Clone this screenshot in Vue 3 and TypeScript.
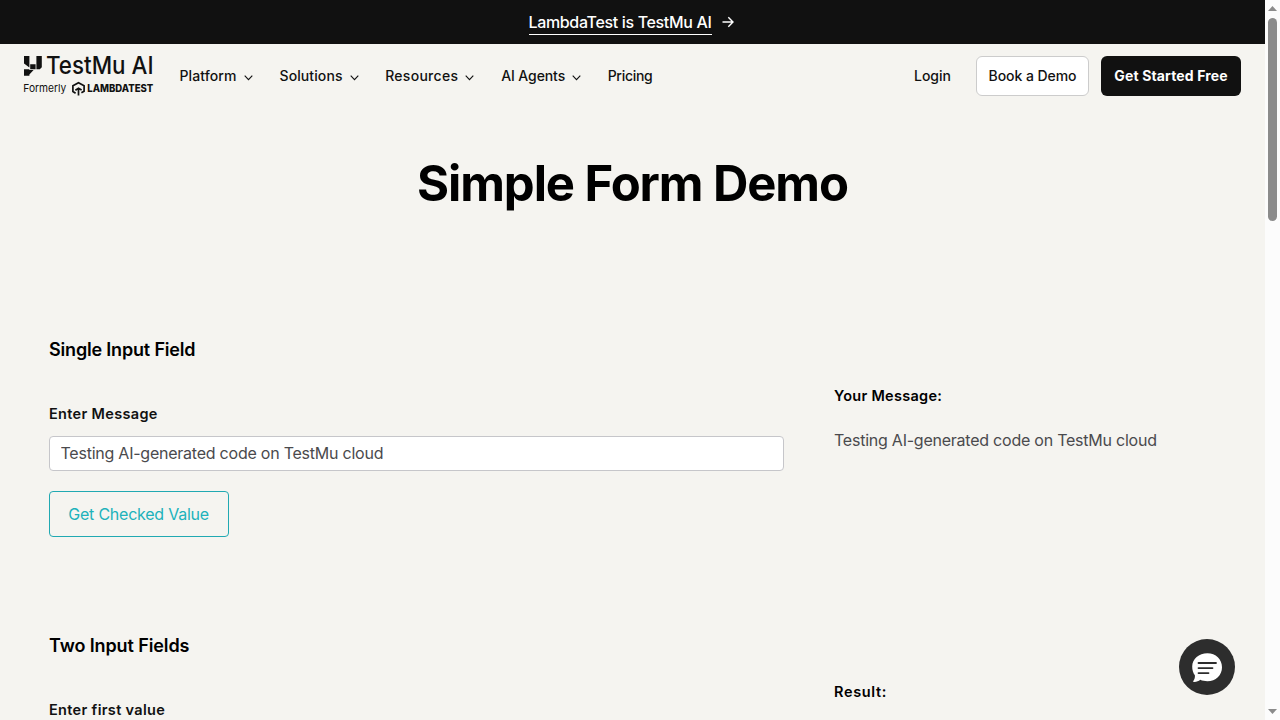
<script setup lang="ts">
import { ref } from 'vue'

interface NavItem {
  label: string
  key: string
  menu: boolean
}

const navItems: NavItem[] = [
  { label: 'Platform', key: 'platform', menu: true },
  { label: 'Solutions', key: 'solutions', menu: true },
  { label: 'Resources', key: 'resources', menu: true },
  { label: 'AI Agents', key: 'agents', menu: true },
  { label: 'Pricing', key: 'pricing', menu: false },
]

const message = ref('Testing AI-generated code on TestMu cloud')
const shown = ref(message.value)

function showMessage(): void {
  shown.value = message.value
}
</script>

<template>
  <div class="viewport">
    <div class="page">
      <div class="banner">
        <a class="banner-link">LambdaTest is TestMu AI</a>
        <svg class="banner-arrow" width="12" height="12" viewBox="0 0 12 12">
          <path d="M0.5 6H11M6.3 1.2L11 6L6.3 10.8" />
        </svg>
      </div>

      <header class="header">
        <a class="logo">
          <svg width="130" height="42" viewBox="0 0 130 42">
            <path class="ink" d="M0 1H5.4V12.6L0 8.6ZM12.4 1H17.8V12.2L15.8 14.2H12.4ZM0 14.2H5.4V20.8H0ZM6.2 9.2H11.6V14.2H6.2ZM5.4 15H9.6L5.4 19.6Z" />
            <text class="brand" x="22" y="19" textLength="107.5" lengthAdjust="spacingAndGlyphs">TestMu AI</text>
            <text class="formerly" x="-0.7" y="37" textLength="43" lengthAdjust="spacingAndGlyphs">Formerly</text>
            <path class="mark" d="M51.6 38.2L48.9 36.5V30.8L54.5 27.7L60.1 30.8V36.2L57.4 37.8M54.5 40.6V33.6M51.4 35.2L54.5 33.2L57.6 35" />
            <text class="lambda" x="63.3" y="37" textLength="66" lengthAdjust="spacingAndGlyphs">LAMBDATEST</text>
          </svg>
        </a>
        <nav class="nav">
          <a v-for="item in navItems" :key="item.key" class="nav-item" :class="item.key">
            <span class="nav-label">{{ item.label }}</span>
            <svg v-if="item.menu" class="chevron" width="9" height="6" viewBox="0 0 9 6">
              <path d="M0.7 0.7L4.5 4.7L8.3 0.7" />
            </svg>
          </a>
        </nav>
        <div class="actions">
          <a class="login">Login</a>
          <a class="btn demo"><span>Book a Demo</span></a>
          <a class="btn start"><span>Get Started Free</span></a>
        </div>
      </header>

      <section class="hero">
        <h1>Simple Form Demo</h1>
      </section>

      <main class="content">
        <section class="block">
          <h2 class="single-title">Single Input Field</h2>
          <div class="columns">
            <div class="form">
              <label>Enter Message</label>
              <input v-model="message" class="field" type="text" />
              <button class="check" type="button" @click="showMessage">Get Checked Value</button>
            </div>
            <div class="output">
              <strong>Your Message:</strong>
              <p>{{ shown }}</p>
            </div>
          </div>
        </section>
        <section class="block">
          <h2>Two Input Fields</h2>
          <div class="columns">
            <div class="form">
              <label>Enter first value</label>
            </div>
            <div class="output">
              <strong class="result-title">Result:</strong>
            </div>
          </div>
        </section>
      </main>
    </div>

    <div class="scrollbar">
      <svg width="9" height="5" viewBox="0 0 9 5"><path d="M0 5L4.5 0L9 5Z" /></svg>
      <div class="thumb"></div>
      <svg class="down" width="9" height="5" viewBox="0 0 9 5"><path d="M0 0L4.5 5L9 0Z" /></svg>
    </div>

    <button class="chat" type="button" aria-label="Chat">
      <svg width="56" height="56" viewBox="0 0 56 56">
        <path class="bubble" d="M28.4 14.2C20 14.2 13.2 19.7 13.2 27.5C13.2 31 14.1 34 15.9 36.3C16.2 38.5 15.3 41 13.8 42.8C16.8 43.2 19.2 42.5 21.3 40.8C23.4 41.8 25.8 42.2 28.4 42.2C36.8 42.2 43 36.2 43 28.2C43 20.2 36.8 14.2 28.4 14.2Z" />
        <path class="lines" d="M19.5 24H37M19.5 29.1H33.5M19.5 34.1H29.5" />
      </svg>
    </button>
  </div>
</template>

<style>
html,
body {
  margin: 0;
  overflow: hidden;
}
</style>

<style scoped>
* {
  box-sizing: border-box;
}

.viewport {
  position: relative;
  display: flex;
  width: 1280px;
  height: 720px;
  overflow: hidden;
  font-family: Inter, 'Noto Sans', sans-serif;
  color: #111;
  background: #f5f4f0;
}

.page {
  width: 1265px;
  height: 720px;
  overflow: hidden;
}

.banner {
  display: flex;
  justify-content: center;
  align-items: center;
  gap: 10px;
  height: 44px;
  padding-right: 3px;
  background: #111;
}

.banner-link {
  height: 25px;
  margin-top: 1px;
  width: 183px;
  border-bottom: 1px solid #fff;
  color: #fff;
  font-size: 16px;
  font-weight: 500;
  line-height: 25px;
  letter-spacing: -0.34px;
  white-space: nowrap;
}

.banner-arrow path {
  fill: none;
  stroke: #fff;
  stroke-width: 1.4;
}

.header {
  display: flex;
  align-items: center;
  height: 64px;
  padding: 0 24px;
}

.logo {
  width: 130px;
  height: 42px;
  margin-right: 25.5px;
}

.logo svg {
  display: block;
  overflow: visible;
}

.ink {
  fill: #111;
}

.brand {
  font-size: 24.5px;
  font-weight: 500;
  fill: #111;
}

.formerly {
  font-size: 11px;
  fill: #111;
}

.mark {
  fill: none;
  stroke: #111;
  stroke-width: 1.7;
}

.lambda {
  font-size: 10px;
  font-weight: 800;
  fill: #111;
}

.nav {
  display: flex;
}

.nav-item {
  display: flex;
  align-items: center;
  font-size: 14px;
  font-weight: 500;
  line-height: 20px;
  white-space: nowrap;
}

.platform {
  width: 100px;
  letter-spacing: 0.1px;
}

.solutions {
  width: 105.7px;
  letter-spacing: 0.1px;
}

.resources {
  width: 116px;
  letter-spacing: 0.28px;
}

.agents {
  width: 106.5px;
  letter-spacing: -0.1px;
}

.pricing {
  letter-spacing: -0.3px;
}

.platform .nav-label { width: 64.5px; }
.solutions .nav-label { width: 70.5px; }
.resources .nav-label { width: 80px; }
.agents .nav-label { width: 71px; }

.chevron {
  margin-top: 3px;
}

.chevron path {
  fill: none;
  stroke: #111;
  stroke-width: 1.1;
}

.actions {
  display: flex;
  align-items: center;
  margin-left: auto;
  font-size: 14px;
  font-weight: 500;
  line-height: 20px;
  white-space: nowrap;
}

.login {
  width: 62px;
}

.btn {
  display: flex;
  align-items: center;
  height: 40px;
  border-radius: 6px;
}

.demo {
  width: 113px;
  margin-right: 12px;
  padding-left: 11.5px;
  border: 1px solid #ccc;
  background: #fff;
  letter-spacing: -0.05px;
}

.start {
  width: 140px;
  padding-left: 13.3px;
  background: #111;
  color: #fff;
  font-weight: 700;
  letter-spacing: 0.14px;
}

.hero {
  height: 218px;
  padding-top: 45px;
}

h1 {
  margin: 0;
  color: #000;
  font-size: 49px;
  font-weight: 700;
  line-height: 62px;
  letter-spacing: -1.1px;
  text-align: center;
}

.content {
  padding: 0 49px;
}

.block {
  height: 296px;
  padding-top: 10px;
}

h2 {
  margin: 0;
  color: #000;
  font-size: 18px;
  font-weight: 600;
  line-height: 28px;
  letter-spacing: -0.1px;
}

.single-title {
  letter-spacing: -0.18px;
}

.columns {
  display: flex;
  gap: 50px;
}

.form {
  width: 735px;
  padding-top: 40px;
}

label {
  display: block;
  font-size: 14.5px;
  font-weight: 600;
  line-height: 20px;
  letter-spacing: 0.33px;
}

.field {
  display: block;
  width: 735px;
  height: 35px;
  margin: 12px 0 20px;
  padding: 0 10.5px 2px;
  border: 1px solid #c6c6ca;
  border-radius: 4px;
  background: #fff;
  color: #4a4a4d;
  font: 400 16px Inter, sans-serif;
  letter-spacing: -0.235px;
}

.check {
  width: 180px;
  height: 46px;
  padding: 0 0 0 18.3px;
  border: 1px solid #21a9b2;
  border-radius: 4px;
  background: transparent;
  color: #20b2bb;
  font: 400 16px Inter, sans-serif;
  letter-spacing: -0.23px;
  text-align: left;
  white-space: nowrap;
}

.output {
  padding-top: 22px;
}

.output strong {
  display: block;
  color: #000;
  font-size: 14.5px;
  font-weight: 600;
  line-height: 20px;
  letter-spacing: 0.28px;
}

.output .result-title {
  letter-spacing: 0.65px;
}

.output p {
  margin: 22px 0 0;
  color: #4a4a4d;
  font-size: 16px;
  line-height: 24px;
  letter-spacing: -0.235px;
  white-space: nowrap;
}

.scrollbar {
  display: flex;
  flex-direction: column;
  align-items: center;
  width: 15px;
  height: 720px;
  padding: 6px 0;
  background: #fcfcfc;
}

.scrollbar svg {
  flex: none;
  fill: #8b8b8b;
}

.thumb {
  width: 9px;
  height: 203px;
  margin-top: 7px;
  border-radius: 5px;
  background: #8b8b8b;
}

.scrollbar .down {
  margin-top: auto;
}

.chat {
  position: absolute;
  right: 45px;
  bottom: 25px;
  width: 56px;
  height: 56px;
  padding: 0;
  border: 0;
  border-radius: 50%;
  background: #2d2d2d;
}

.chat svg {
  display: block;
}

.bubble {
  fill: #fff;
}

.lines {
  fill: none;
  stroke: #2d2d2d;
  stroke-width: 1.8;
  stroke-linecap: round;
}
</style>
